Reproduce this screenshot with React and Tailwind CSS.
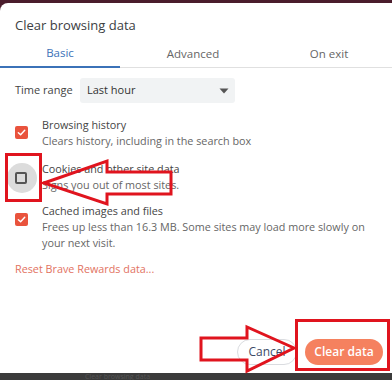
import React from "react";

function Check() {
  return (
    <div className="w-[13px] h-[13px] rounded-[2px] bg-[#e9533d] flex items-center justify-center shrink-0">
      <svg width="9" height="9" viewBox="0 0 10 10" fill="none">
        <path d="M1.5 5.2 L4 7.6 L8.6 2.6" stroke="white" strokeWidth="1.6" strokeLinecap="round" strokeLinejoin="round" />
      </svg>
    </div>
  );
}

export default function App() {
  return (
    <div className="relative w-[392px] h-[380px] overflow-hidden bg-[#4a1c2c] flex flex-col" style={{ fontFamily: "'Open Sans', 'Liberation Sans', sans-serif" }}>
      <div className="h-[3px] shrink-0" />
      <div className="bg-white rounded-tl-[8px] h-[370px] shrink-0 flex flex-col">
        <div className="px-[15px] pt-[12px] text-[13px] leading-[20px] text-[#3c4043]">Clear browsing data</div>
        <div className="mt-[5px] flex h-[28px] border-b border-[#e0e0e0] text-[11.5px]">
          <div className="w-[120px] flex items-center justify-center text-[#3b72b8] border-b-2 border-[#3b72b8] -mb-px">Basic</div>
          <div className="w-[146px] flex items-center justify-center text-[#666]">Advanced</div>
          <div className="w-[126px] flex items-center justify-center text-[#666]">On exit</div>
        </div>
        <div className="mt-[10px] flex items-center pl-[15px]">
          <div className="w-[65px] text-[11px] text-[#444]">Time range</div>
          <div className="w-[155px] h-[25px] bg-[#f1f3f4] rounded-[3px] flex items-center justify-between pl-[7px] pr-[6px] text-[11px] text-[#333]">
            <span>Last hour</span>
            <svg width="10" height="6" viewBox="0 0 10 6"><path d="M0.5 0.5 L9.5 0.5 L5 5.5 Z" fill="#555" /></svg>
          </div>
        </div>
        <div className="mt-[14px] flex pl-[15px] text-[10.8px] leading-[16px]">
          <div className="w-[27px] pt-[9px]"><Check /></div>
          <div>
            <div className="text-[#444]">Browsing history</div>
            <div className="text-[#666]">Clears history, including in the search box</div>
          </div>
        </div>
        <div className="mt-[12px] flex pl-[15px] text-[10.8px] leading-[16px]">
          <div className="w-[27px] relative">
            <div className="absolute left-[-8px] top-[2px] w-[30px] h-[30px] rounded-full bg-[#dcdcdc]" />
            <div className="absolute left-0 top-[11px] w-[12px] h-[12px] rounded-[2px] border-2 border-[#555]" />
          </div>
          <div>
            <div className="text-[#444]">Cookies and other site data</div>
            <div className="text-[#666]">Signs you out of most sites.</div>
          </div>
        </div>
        <div className="mt-[10px] flex pl-[15px] text-[10.8px] leading-[16px]">
          <div className="w-[27px] pt-[10px]"><Check /></div>
          <div className="w-[330px]">
            <div className="text-[#444]">Cached images and files</div>
            <div className="text-[#666]">Frees up less than 16.3 MB. Some sites may load more slowly on your next visit.</div>
          </div>
        </div>
        <div className="mt-[10px] pl-[15px] text-[10.8px] leading-[16px] text-[#e2725f]">Reset Brave Rewards data...</div>
        <div className="mt-auto mb-[8px] flex justify-end gap-[8px] pr-[9px]">
          <div className="w-[60px] h-[26px] rounded-full border border-[#dadce0] flex items-center justify-center text-[12px] text-[#3c4a66]">Cancel</div>
          <div className="w-[78px] h-[26px] rounded-full bg-[#f5815f] flex items-center justify-center text-[12px] text-white font-semibold">Clear data</div>
        </div>
      </div>
      <div className="flex-1 bg-[#3b3b3b] pl-[85px] text-[7px] leading-[7px] text-[#555]">Clear browsing data</div>

      <svg className="absolute inset-0 pointer-events-none" width="392" height="380" viewBox="0 0 392 380">
        <rect x="6.5" y="154.5" width="34" height="46" fill="none" stroke="#e0141e" strokeWidth="3" />
        <polygon points="44,183 107,161 107,172 171,172 171,194 107,194 107,204" fill="none" stroke="#e0141e" strokeWidth="3" strokeLinejoin="miter" />
        <rect x="296.5" y="320.5" width="92" height="49" fill="none" stroke="#e0141e" strokeWidth="3" />
        <polygon points="201,338 247,338 247,327 294,348 247,371 247,360 201,360" fill="none" stroke="#e0141e" strokeWidth="3" strokeLinejoin="miter" />
      </svg>
    </div>
  );
}
